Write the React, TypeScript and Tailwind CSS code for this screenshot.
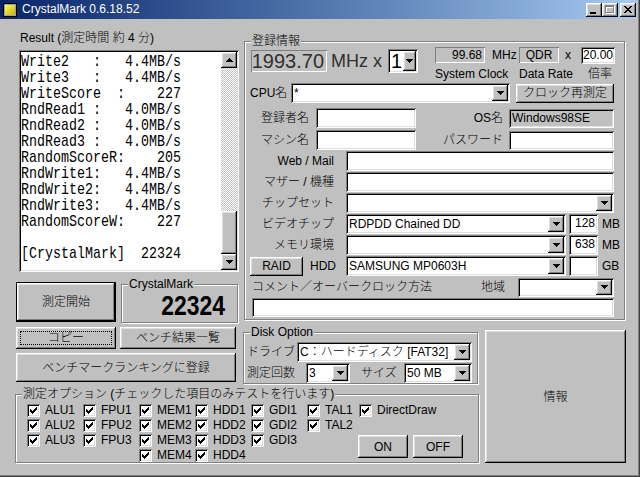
import React from "react";

const RAISED =
  "bg-[#c0c0c0] shadow-[inset_-1px_-1px_#000,inset_1px_1px_#fff,inset_-2px_-2px_#808080,inset_2px_2px_#dfdfdf]";
const SUNKEN =
  "shadow-[inset_1px_1px_#808080,inset_-1px_-1px_#fff,inset_2px_2px_#000,inset_-2px_-2px_#dfdfdf]";
const STATIC = "shadow-[inset_1px_1px_#808080,inset_-1px_-1px_#fff]";
const ETCHED = "border border-[#808080] shadow-[inset_1px_1px_#fff,1px_1px_#fff]";

const resultLines = [
  "Write2   :   4.4MB/s",
  "Write3   :   4.4MB/s",
  "WriteScore  :    227",
  "RndRead1 :   4.0MB/s",
  "RndRead2 :   4.0MB/s",
  "RndRead3 :   4.0MB/s",
  "RandomScoreR:    205",
  "RndWrite1:   4.4MB/s",
  "RndWrite2:   4.4MB/s",
  "RndWrite3:   4.4MB/s",
  "RandomScoreW:    227",
  "",
  "[CrystalMark]  22324",
];

const optionCols = [
  ["ALU1", "ALU2", "ALU3"],
  ["FPU1", "FPU2", "FPU3"],
  ["MEM1", "MEM2", "MEM3", "MEM4"],
  ["HDD1", "HDD2", "HDD3", "HDD4"],
  ["GDI1", "GDI2", "GDI3"],
  ["TAL1", "TAL2"],
];

function Arrow({ up = false }: { up?: boolean }) {
  return (
    <svg width="7" height="4" viewBox="0 0 7 4" shapeRendering="crispEdges" className={up ? "rotate-180" : ""}>
      <path d="M0 0H7V1H6V2H5V3H4V4H3V3H2V2H1V1H0Z" fill="#000" />
    </svg>
  );
}

function DropBtn({ className = "w-[16px]" }: { className?: string }) {
  return (
    <div className={`${RAISED} ${className} h-full shrink-0 flex items-center justify-center`}>
      <Arrow />
    </div>
  );
}

function Combo({ className, text = "", btn }: { className: string; text?: string; btn?: string }) {
  return (
    <div className={`flex bg-white p-[2px] shrink-0 ${SUNKEN} ${className}`}>
      <div className="flex-1 min-w-0 pl-[1px] leading-[16px] whitespace-nowrap overflow-hidden">{text}</div>
      <DropBtn className={btn} />
    </div>
  );
}

function Edit({ className, text = "", gray = false }: { className: string; text?: string; gray?: boolean }) {
  return (
    <div
      className={`shrink-0 px-[3px] leading-[19px] whitespace-nowrap overflow-hidden ${SUNKEN} ${
        gray ? "bg-[#c0c0c0]" : "bg-white"
      } ${className}`}
    >
      {text}
    </div>
  );
}

function Btn({ className, children }: { className: string; children?: React.ReactNode }) {
  return (
    <div className={`${RAISED} shrink-0 flex items-center justify-center whitespace-nowrap ${className}`}>
      {children}
    </div>
  );
}

function Group({ label, className, children }: { label: string; className: string; children?: React.ReactNode }) {
  return (
    <div className={`relative shrink-0 ${ETCHED} ${className}`}>
      <span className="absolute -top-[8px] left-[6px] px-[1px] bg-[#c0c0c0] leading-[14px] whitespace-nowrap">
        {label}
      </span>
      {children}
    </div>
  );
}

function Check() {
  const tops = [5, 6, 7, 6, 5, 4, 3];
  return (
    <span className={`block w-[13px] h-[13px] bg-white shrink-0 ${SUNKEN}`}>
      <svg width="13" height="13" shapeRendering="crispEdges" className="block">
        {tops.map((y, i) => (
          <rect key={i} x={3 + i} y={y} width="1" height="3" fill="#000" />
        ))}
      </svg>
    </span>
  );
}

function CheckItem({ label }: { label: string }) {
  return (
    <div className="flex items-center h-[15px]">
      <Check />
      <span className="ml-[5px] leading-[13px] whitespace-nowrap">{label}</span>
    </div>
  );
}

function TitleButtons() {
  return (
    <div className="ml-auto mr-[1px] flex">
      <div className={`${RAISED} w-[16px] h-[14px]`}>
        <svg width="16" height="14" shapeRendering="crispEdges" className="block">
          <rect x="4" y="9" width="6" height="2" fill="#000" />
        </svg>
      </div>
      <div className={`${RAISED} w-[16px] h-[14px]`}>
        <svg width="16" height="14" shapeRendering="crispEdges" className="block">
          <path d="M4 3H13V11H4Z M5 5V10H12V5Z" fill="#fff" fillRule="evenodd" />
          <path d="M3 2H12V10H3Z M4 4V9H11V4Z" fill="#808080" fillRule="evenodd" />
        </svg>
      </div>
      <div className={`${RAISED} w-[16px] h-[14px] ml-[2px]`}>
        <svg width="16" height="14" shapeRendering="crispEdges" className="block">
          {[0, 1, 2, 3, 4, 5, 6].map((i) => (
            <React.Fragment key={i}>
              <rect x={4 + i} y={3 + i} width="2" height="1" fill="#000" />
              <rect x={10 - i} y={3 + i} width="2" height="1" fill="#000" />
            </React.Fragment>
          ))}
        </svg>
      </div>
    </div>
  );
}

function AppIcon() {
  return (
    <svg width="14" height="14" shapeRendering="crispEdges" className="block ml-[3px] shrink-0">
      <defs>
        <linearGradient id="ig" x1="0" y1="0" x2="1" y2="1">
          <stop offset="0" stopColor="#ffff60" />
          <stop offset="1" stopColor="#c8b000" />
        </linearGradient>
      </defs>
      <rect x="0" y="0" width="14" height="14" fill="#000" />
      <rect x="1" y="1" width="12" height="12" fill="#a0a0a0" />
      <rect x="2" y="2" width="10" height="10" fill="url(#ig)" />
    </svg>
  );
}

function ResultList() {
  return (
    <div className={`ml-[4px] mt-[5px] w-[220px] h-[222px] bg-white p-[2px] flex ${SUNKEN}`}>
      <div className="flex-1 overflow-hidden">
        <pre className="origin-top-left scale-x-[0.784] pt-[2px] font-['Liberation_Mono',monospace] text-[17px] leading-[16px] whitespace-pre">
          {resultLines.join("\n")}
        </pre>
      </div>
      <div className="w-[16px] flex flex-col">
        <div className={`${RAISED} h-[16px] flex items-center justify-center`}>
          <Arrow up />
        </div>
        <div className="flex-1 bg-[repeating-conic-gradient(#fff_0_25%,#c0c0c0_0_50%)] bg-[length:2px_2px]" />
        <div className={`${RAISED} h-[43px]`} />
        <div className={`${RAISED} h-[16px] flex items-center justify-center`}>
          <Arrow />
        </div>
      </div>
    </div>
  );
}

function Registration() {
  return (
    <Group label="登録情報" className="ml-[4px] mt-[22px] w-[381px] h-[279px]">
      {/* clock row */}
      <div className="flex items-start mt-[5px] h-[36px]">
        <div className={`ml-[6px] mt-[3px] w-[76px] h-[22px] text-right pr-[3px] text-[20px] leading-[22px] text-[#303030] ${STATIC}`}>
          1993.70
        </div>
        <span className="ml-[4px] mt-[3px] w-[57px] text-[18px] leading-[22px] whitespace-nowrap text-[#303030]">
          MHz x
        </span>
        <div className={`mt-[2px] w-[30px] h-[24px] bg-white p-[2px] flex ${SUNKEN}`}>
          <div className="flex-1 pl-[1px] text-[20px] leading-[20px]">1</div>
          <DropBtn className="w-[13px]" />
        </div>
        <div className="ml-[17px] flex flex-col">
          <div className="flex items-center h-[16px]">
            <div className={`w-[50px] h-[16px] text-right pr-[3px] leading-[16px] ${STATIC}`}>99.68</div>
            <span className="ml-[7px] w-[27px] leading-[16px]">MHz</span>
            <div className={`w-[40px] h-[16px] text-center leading-[16px] ${STATIC}`}>QDR</div>
            <span className="ml-[6px] w-[16px] leading-[16px]">x</span>
            <div className={`w-[34px] h-[17px] bg-white text-right pr-[2px] leading-[17px] ${SUNKEN}`}>20.00</div>
          </div>
          <div className="flex mt-[4px] leading-[14px] whitespace-nowrap">
            <span className="w-[84px]">System Clock</span>
            <span className="w-[69px]">Data Rate</span>
            <span>倍率</span>
          </div>
        </div>
      </div>

      {/* CPU */}
      <div className="flex items-center h-[20px]">
        <span className="ml-[5px] w-[41px] leading-[20px]">CPU名</span>
        <Combo className="w-[219px] h-[20px]" text="*" />
        <Btn className="ml-[6px] w-[98px] h-[19px]">クロック再測定</Btn>
      </div>

      <div className="flex items-center h-[20px] mt-[5px]">
        <span className="w-[64px] text-right">登録者名</span>
        <Edit className="ml-[7px] w-[100px] h-[20px]" />
        <span className="w-[87px] text-right">OS名</span>
        <Edit className="ml-[6px] w-[105px] h-[19px]" text="Windows98SE" gray />
      </div>
      <div className="flex items-center h-[20px] mt-[2px]">
        <span className="w-[64px] text-right">マシン名</span>
        <Edit className="ml-[7px] w-[100px] h-[20px]" />
        <span className="w-[87px] text-right">パスワード</span>
        <Edit className="ml-[6px] w-[105px] h-[19px]" />
      </div>

      <div className="flex items-center h-[20px] mt-[1px]">
        <span className="w-[89px] text-right">Web / Mail</span>
        <Edit className="ml-[12px] w-[268px] h-[20px]" />
      </div>
      <div className="flex items-center h-[20px] mt-[1px]">
        <span className="w-[89px] text-right">マザー / 機種</span>
        <Edit className="ml-[12px] w-[268px] h-[20px]" />
      </div>
      <div className="flex items-center h-[20px] mt-[1px]">
        <span className="w-[89px] text-right">チップセット</span>
        <Combo className="ml-[12px] w-[268px] h-[20px]" />
      </div>
      <div className="flex items-center h-[20px] mt-[1px]">
        <span className="w-[89px] text-right">ビデオチップ</span>
        <Combo className="ml-[12px] w-[220px] h-[20px]" text="RDPDD Chained DD" />
        <Edit className="ml-[3px] w-[29px] h-[20px] text-right" text="128" />
        <span className="ml-[4px]">MB</span>
      </div>
      <div className="flex items-center h-[20px] mt-[1px]">
        <span className="w-[89px] text-right">メモリ環境</span>
        <Combo className="ml-[12px] w-[220px] h-[20px]" />
        <Edit className="ml-[3px] w-[29px] h-[20px] text-right" text="638" />
        <span className="ml-[4px]">MB</span>
      </div>
      <div className="flex items-center h-[20px] mt-[1px]">
        <Btn className="ml-[5px] w-[53px] h-[19px]">RAID</Btn>
        <span className="ml-[7px] w-[36px]">HDD</span>
        <Combo className="w-[220px] h-[20px]" text="SAMSUNG MP0603H" />
        <Edit className="ml-[3px] w-[29px] h-[20px]" />
        <span className="ml-[4px]">GB</span>
      </div>
      <div className="flex items-center h-[20px] mt-[1px]">
        <span className="ml-[7px] w-[229px] whitespace-nowrap">コメント／オーバークロック方法</span>
        <span className="w-[37px]">地域</span>
        <Combo className="w-[96px] h-[19px]" />
      </div>
      <Edit className="ml-[7px] mt-[1px] w-[362px] h-[19px]" />
    </Group>
  );
}

export default function App() {
  return (
    <div className="w-[640px] h-[477px] bg-[#c0c0c0] overflow-hidden text-[12px] font-light text-black font-['Liberation_Sans','Noto_Sans_CJK_JP',sans-serif] shadow-[inset_-1px_-1px_#404040,inset_-2px_-2px_#808080]">
      {/* title bar */}
      <div className="h-[19px] mr-[3px] flex items-center bg-linear-to-r from-[#0a246a] to-[#a6caf0] text-white">
        <AppIcon />
        <span className="ml-[5px] leading-[19px] whitespace-nowrap">CrystalMark 0.6.18.52</span>
        <TitleButtons />
      </div>

      {/* upper area */}
      <div className="flex items-start pl-[15px] h-[303px]">
        <div className="w-[225px] shrink-0 flex flex-col">
          <div className="mt-[12px] pl-[5px] h-[14px] leading-[14px] whitespace-nowrap">Result (測定時間 約 4 分)</div>
          <ResultList />
          <div className="flex items-start mt-[10px]">
            <div className="ml-[1px] w-[100px] h-[40px] flex items-center justify-center bg-[#c0c0c0] shadow-[inset_0_0_0_1px_#000,inset_-2px_-2px_#000,inset_2px_2px_#fff,inset_-3px_-3px_#808080,inset_3px_3px_#dfdfdf]">
              測定開始
            </div>
            <Group label="CrystalMark" className="ml-[5px] mt-[2px] w-[117px] h-[39px]">
              <div className="flex justify-end pr-[12px] pt-[9px]">
                <span className="inline-block origin-right scale-x-[0.85] text-[27px] leading-[24px] font-bold">
                  22324
                </span>
              </div>
            </Group>
          </div>
        </div>
        <Registration />
      </div>

      {/* lower area */}
      <div className="flex items-start pl-[15px]">
        <div className="w-[465px] shrink-0 flex flex-col">
          <div className="flex items-start">
            <div className="ml-[1px] mt-[5px] w-[220px] flex flex-col">
              <div className="flex">
                <div className={`${RAISED} w-[100px] h-[22px] p-[4px]`}>
                  <div className="h-full border border-dotted border-black flex items-center justify-center leading-[12px]">
                    コピー
                  </div>
                </div>
                <Btn className="ml-[4px] w-[116px] h-[22px]">ベンチ結果一覧</Btn>
              </div>
              <Btn className="mt-[4px] w-[220px] h-[29px]">ベンチマークランキングに登録</Btn>
            </div>
            <Group label="Disk Option" className="ml-[7px] mt-[10px] w-[235px] h-[52px]">
              <div className="flex items-center mt-[9px] h-[20px]">
                <span className="ml-[3px] w-[50px]">ドライブ</span>
                <Combo className="w-[175px] h-[20px]" text="C：ハードディスク [FAT32]" />
              </div>
              <div className="flex items-center mt-[1px] h-[20px]">
                <span className="ml-[3px] w-[59px]">測定回数</span>
                <Combo className="w-[44px] h-[20px]" text="3" />
                <span className="ml-[11px] w-[43px]">サイズ</span>
                <Combo className="w-[68px] h-[20px]" text="50 MB" />
              </div>
            </Group>
          </div>

          <Group label="測定オプション (チェックした項目のみテストを行います)" className="mt-[10px] w-[464px] h-[69px]">
            <div className="flex mt-[8px] ml-[11px]">
              {optionCols.map((col, i) => (
                <div key={i} className={`flex flex-col ${i === 5 ? "w-[52px]" : "w-[56px]"}`}>
                  {col.map((label) => (
                    <CheckItem key={label} label={label} />
                  ))}
                </div>
              ))}
              <div className="flex flex-col">
                <CheckItem label="DirectDraw" />
                <div className="flex mt-[17px] -ml-px">
                  <Btn className="w-[50px] h-[23px]">ON</Btn>
                  <Btn className="ml-[5px] w-[50px] h-[23px]">OFF</Btn>
                </div>
              </div>
            </div>
          </Group>
        </div>
        <Btn className="ml-[5px] mt-[8px] w-[141px] h-[133px]">情報</Btn>
      </div>
    </div>
  );
}
